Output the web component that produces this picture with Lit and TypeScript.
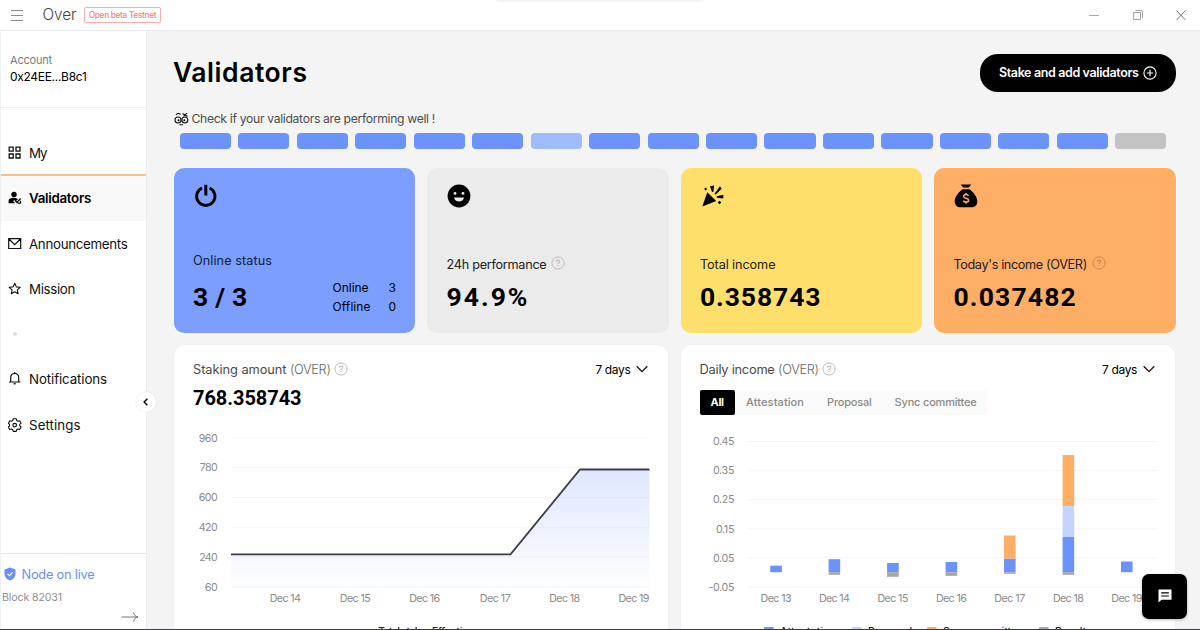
import { LitElement, html, svg, css, nothing } from "lit";
import { customElement, property } from "lit/decorators.js";
import { classMap } from "lit/directives/class-map.js";

/** One-line label whose tracking is tuned so that it takes a given width. */
@customElement("fit-label")
class FitLabel extends LitElement {
  @property({ type: Number }) w = 0;
  @property() text = "";

  static styles = css`
    :host { display: inline-block; white-space: pre; flex: none; }
    .t { display: inline-block; }
  `;

  async firstUpdated() {
    await document.fonts.ready;
    const span = this.renderRoot.querySelector<HTMLElement>(".t")!;
    const natural = span.getBoundingClientRect().width;
    if (this.w && natural) {
      span.style.letterSpacing = `${(this.w - natural) / this.text.length}px`;
    }
  }

  render() {
    return html`<span class="t">${this.text}</span>`;
  }
}

const label = (text: string, w: number, cls = "") =>
  html`<fit-label class=${cls} .text=${text} .w=${w}></fit-label>`;

const navIcons = {
  grid: svg`<g fill="none" stroke="#111" stroke-width="1.3"><path d="M1.2 1.2h4v4h-4zM8 1.2h4v4H8zM1.2 8h4v4h-4zM8 8h4v4H8z"/></g>`,
  validator: svg`<circle cx="6" cy="3.4" r="2.7"/><path d="M.6 12.2V10c0-2.2 2.4-3.3 5-3.3 1.8 0 3.400.5 4.300 1.500L7.700 10.200 6.400 9l-1.200 1.200 2 2z"/><path d="M7 9.700l1.800 1.800 3.800-4M9.500 12.200h3v-2.400" fill="none" stroke="#000" stroke-width="1.200"/>`,
  mail: svg`<path d="M.7 1.700h12v9.800h-12zM1 2l5.700 5.600L12.400 2" fill="none" stroke="#111" stroke-width="1.200"/>`,
  star: svg`<path d="M6.700 1.300l1.600 3.600 3.900.4-2.900 2.600.8 3.900-3.400-2-3.400 2 .8-3.900-2.900-2.600 3.900-.4z" fill="none" stroke="#111" stroke-width="1.100" stroke-linejoin="round"/>`,
  bell: svg`<path d="M1 10h11.400M2.700 10V5.500c0-2.400 1.600-4 4-4s4 1.600 4 4V10" fill="none" stroke="#111" stroke-width="1.200"/><path d="M5.400 11.200h2.600a1.300 1.300 0 0 1-2.600 0zM6 .3h1.400v1.400H6z"/>`,
  gear: svg`<path d="M5.200.8h3l.5 1.700 1.200.7 1.700-.5 1.500 2.500-1.300 1.200v1.400l1.300 1.200-1.500 2.500-1.700-.5-1.200.7-.5 1.700h-3l-.5-1.700-1.200-.7-1.700.5L.3 9l1.300-1.200V6.400L.3 5.200l1.500-2.500 1.700.5 1.200-.7z" fill="none" stroke="#111" stroke-width="1.100" stroke-linejoin="round"/><circle cx="6.700" cy="7.100" r="1.800" fill="none" stroke="#111" stroke-width="1.200"/>`,
};

interface NavItem { text: string; w: number; icon?: keyof typeof navIcons; active?: boolean }
const nav: NavItem[] = [
  { text: "My", w: 17.500, icon: "grid" },
  { text: "Validators", w: 62, icon: "validator", active: true },
  { text: "Announcements", w: 98.500, icon: "mail" },
  { text: "Mission", w: 46, icon: "star" },
  { text: "", w: 0 },
  { text: "Notifications", w: 78, icon: "bell" },
  { text: "Settings", w: 51.700, icon: "gear" },
];

const help = (cls = "") => html`<svg class="help ${cls}" viewBox="0 0 14 14">
  <circle cx="7" cy="7" r="6.1" fill="none" stroke="currentColor" />
  <path d="M5.300 5.700c0-1 .7-1.600 1.700-1.600s1.700.6 1.700 1.500c0 1.200-1.600 1.200-1.600 2.400M7.100 9.100v1" fill="none" stroke="currentColor" stroke-width="1.100" />
</svg>`;

const chevron = html`<svg class="chev" viewBox="0 0 12 8"><path d="M.7 1.200L6 6.600l5.300-5.400" fill="none" stroke="#111" stroke-width="1.300" /></svg>`;

const cardIcons = {
  power: svg`<path d="M8 3.900a9.200 9.200 0 1 0 7.600 0" fill="none" stroke="#000" stroke-width="2.800"/><path d="M11.800.8v10.700" stroke="#000" stroke-width="3"/>`,
  smile: svg`<circle cx="12" cy="12" r="11.400"/><g fill="#ebebeb"><circle cx="8" cy="9.400" r="1.400"/><circle cx="16" cy="9.400" r="1.400"/><path d="M7 13.500h10c-.4 2.400-2.500 4-5 4s-4.600-1.600-5-4z"/></g>`,
  party: svg`<path d="M6.300 8.200L15.200 17 1.300 22.500z"/><path d="M9 2.200l4-.6-.5 6.200-1.500.2zM19 2.200l1.700 2.600-6.200 6-1-1zM15.800 12.200l6.500-1.500v3.700l-6.500-.6zM4.600 3.500l1.500 1.500-1.500 1.500-1.500-1.500zM18.500 16.700l1.800 1.800-1.800 1.800-1.800-1.800z"/>`,
  bag: svg`<path d="M6.800.6h10.400l-2.300 2.900H9.100zM8.600 5.300h6.800c4 2.700 7.900 7.700 7.900 12 0 4-2.400 6-6.300 6H7C3.100 23.300.7 21.300.7 17.300.7 13 4.600 8 8.600 5.300z"/><path d="M14.500 12c-.4-.9-1.300-1.400-2.500-1.400-1.400 0-2.400.7-2.400 1.800 0 2.600 5 1.100 5 3.800 0 1.200-1.100 1.900-2.600 1.900-1.300 0-2.300-.5-2.700-1.500M12 9.100v1.500M12 18.100v1.600" fill="none" stroke="#ffae66" stroke-width="1.500"/>`,
};

interface Day { day: string; x: number; att: number; sync?: [number, number]; prop?: [number, number]; pen?: number }
const days: Day[] = [
  { day: "Dec 13", x: 776, att: 565.700 },
  { day: "Dec 14", x: 834.300, att: 559.200, pen: 574.800 },
  { day: "Dec 15", x: 892.800, att: 563, pen: 576.800 },
  { day: "Dec 16", x: 951.300, att: 562, pen: 575.900 },
  { day: "Dec 17", x: 1009.700, att: 558.700, pen: 573.800, sync: [535.500, 558.700] },
  { day: "Dec 18", x: 1068.300, att: 537, pen: 574.800, sync: [455, 506], prop: [506, 537] },
  { day: "Dec 19", x: 1126.700, att: 561.500 },
];
const ZERO = 572.200;

const stakeTicks: [string, number, number][] = [
  ["960", 437.500, 19], ["780", 467.300, 18], ["600", 497.300, 19],
  ["420", 527.100, 19], ["240", 557, 18.500], ["60", 586.900, 13],
];
const incomeTicks: [string, number, number][] = [
  ["0.45", 441.300, 21.500], ["0.35", 470.400, 21.500], ["0.25", 499.400, 21.500],
  ["0.15", 528.600, 18.500], ["0.05", 557.700, 21.500], ["-0.05", 586.900, 26],
];
const stakeDays: [string, number][] = [
  ["Dec 14", 285.300], ["Dec 15", 355.300], ["Dec 16", 424.700],
  ["Dec 17", 495.200], ["Dec 18", 564.700], ["Dec 19", 634],
];

const ticks = (list: [string, number, number][], right: number, x1: number, x2: number) =>
  list.map(([t, y, w]) => svg`
    <path d="M${x1} ${y + 0.2}H${x2}" stroke="#f4f5f7" stroke-width="1" />
    <text class="axis" x=${right - w} y=${y + 4.100} textLength=${w}>${t}</text>`);

const dayText = (t: string, x: number) =>
  svg`<text class="axis" x=${x - 15.500} y="601.900" textLength="31">${t}</text>`;

@customElement("app-root")
class AppRoot extends LitElement {
  static styles = css`
    :host {
      display: block; width: 1200px; height: 630px; overflow: hidden; position: relative;
      font-family: Inter, "Liberation Sans", sans-serif; color: #000; background: #f4f4f4;
    }
    * { box-sizing: border-box; }
    svg { display: block; flex: none; }
    .top {
      height: 31px; display: flex; align-items: center; background: #fff;
      border-bottom: 1px solid #e8eaed; padding: 0 13px 0 11px;
    }
    .burger { width: 12px; height: 12px; }
    .brand { margin-left: 19.500px; font-size: 15.300px; font-weight: 300; color: #444; line-height: 18px; }
    .badge {
      margin-left: 7.500px; width: 77px; height: 16px; display: flex; justify-content: center; align-items: center;
      border: 1px solid #ffabab; border-radius: 2px; color: #ff8080; font-size: 8.300px; font-weight: 500;
    }
    .win { margin-left: auto; display: flex; gap: 31.500px; }
    .win svg { width: 12px; height: 12px; }
    .notch {
      position: absolute; left: 496px; top: -4px; width: 206px; height: 4px; border-radius: 4px;
      box-shadow: 0 0 4px rgba(0, 0, 0, .12);
    }
    .body { display: flex; height: 599px; }
    .side {
      width: 147px; flex: none; display: flex; flex-direction: column; background: #fff;
      border-left: 1px solid #edf0f4; border-right: 1px solid #e9ebee;
    }
    .acct { height: 77px; padding: 21px 0 0 9px; border-bottom: 1px solid #eef0f2; display: flex; flex-direction: column; }
    .acct .k { font-size: 11px; line-height: 17px; color: #7a7a7a; }
    .acct .v { font-size: 12px; line-height: 16px; }
    .nav { padding-top: 22.500px; display: flex; flex-direction: column; }
    .item { height: 45.280px; display: flex; align-items: center; gap: 7.500px; padding-left: 6.500px; font-size: 13.300px; color: #111; }
    .item svg { width: 14px; height: 14px; }
    .item.active { background: linear-gradient(#ffc083 0 0) top / 100% 1px no-repeat #f9f9f9; box-shadow: 0 -1px 0 #ffc083; font-weight: 600; color: #000; margin-top: -1px; height: 46.280px; }
    .dot { width: 4px; height: 4px; border-radius: 50%; background: #ddd; margin-left: 5px; }
    .foot { margin-top: auto; height: 77px; border-top: 1px solid #e6e8ea; display: flex; flex-direction: column; }
    .live { display: flex; align-items: center; gap: 5.500px; height: 20px; margin: 10px 0 0 3px; color: #6a90f8; font-size: 12.800px; }
    .live svg { width: 12px; height: 14px; }
    .block { font-size: 10.600px; line-height: 15px; color: #8f8f8f; margin: 6px 0 0 1px; }
    .arrow { width: 18px; height: 12px; align-self: flex-end; margin: 6px 7px 0 0; }
    .collapse {
      position: absolute; left: 136px; top: 391.500px; width: 20px; height: 20px; border-radius: 50%;
      background: #fff; box-shadow: 0 0 2px rgba(0, 0, 0, .12); display: grid; place-items: center;
    }
    .collapse svg { width: 8px; height: 10px; }
    .main { flex: 1; padding: 23px 25px 0 27px; overflow: hidden; }
    .head { display: flex; justify-content: space-between; height: 38px; }
    .title { font-size: 26.500px; font-weight: 600; line-height: 37px; margin-left: -1px; }
    .cta {
      width: 196px; height: 37.500px; border-radius: 18px; background: #000; color: #fff; display: flex;
      align-items: center; padding-left: 19px; gap: 4px; font-size: 12.500px; font-weight: 600; margin-right: -1px;
    }
    .cta svg { width: 14px; height: 14px; }
    .check { display: flex; align-items: center; height: 17px; margin-top: 18px; gap: 2.500px; font-size: 12.200px; color: #4d4d4d; }
    .check svg { width: 15px; height: 14px; }
    .bars { display: flex; gap: 7.400px; height: 16px; margin: 6px 8.600px 0 5.800px; }
    .bar { flex: 1; border-radius: 4px; background: #6c93fb; }
    .bar.soft { background: #a1bcfc; }
    .bar.off { background: #c3c3c3; }
    .cards { display: grid; grid-template-columns: repeat(4, 1fr); gap: 12.400px; margin: 19px -.500px 0 0; height: 165px; }
    .card { border-radius: 10px; padding: 15.500px 19px 0; display: flex; flex-direction: column; }
    .card.blue { background: #7b9eff; }
    .card.gray { background: #ebebeb; }
    .card.yellow { background: #ffdf6b; }
    .card.orange { background: #ffae66; }
    .card > svg { width: 24px; height: 24px; margin-left: 1px; }
    .lab { display: flex; align-items: center; height: 18px; margin-top: 47.500px; gap: 5px; font-size: 12.700px; color: #222; }
    .blue .lab { margin-top: 43.500px; color: #13203f; }
    .blue .row { margin-top: 9px; }
    .help { width: 14px; height: 14px; color: #bdbdbd; position: relative; top: -1px; }
    .orange .help { color: #cf8a4d; }
    .row { display: flex; justify-content: space-between; height: 38px; margin-top: 5px; }
    .big { font-family: Roboto, Inter, sans-serif; font-weight: 700; font-size: 26.500px; line-height: 38px; }
    .counts { display: grid; grid-template-columns: 56px auto; font-size: 12px; line-height: 19px; color: #000; justify-items: start; }
    .panels { display: grid; grid-template-columns: 1fr 1fr; gap: 12.200px; margin-top: 12px; }
    .panel { height: 290px; background: #fff; border-radius: 10px 10px 0 0; box-shadow: 0 0 2px rgba(0, 0, 0, .06); }
    .ph { display: flex; align-items: center; height: 20px; margin: 14px 20px 0 19px; font-size: 12.800px; color: #4a4a4a; }
    .ph .unit { color: #666; margin-left: 3.500px; font-weight: 300; }
    .ph .help { margin-left: 3.500px; top: -.500px; }
    .range { margin-left: auto; display: flex; align-items: center; gap: 6px; color: #000; font-size: 12px; }
    .chev { width: 12px; height: 8px; }
    .sum { font-family: Roboto, Inter, sans-serif; font-weight: 700; font-size: 20px; line-height: 22px; height: 22px; margin: 8px 19px 0; }
    .tabs {
      display: flex; align-items: center; width: 287px; height: 24.500px; margin: 11px 19px 0; background: #fafafa;
      border-radius: 2px; font-size: 11px; font-weight: 500; color: #8a8a8a; gap: 23px;
    }
    .tab-on { width: 35px; height: 24.500px; border-radius: 2px; background: #000; color: #fff; font-weight: 700; display: grid; place-items: center; margin-right: -11.500px; }
    .chart { width: 494.400px; height: 210px; }
    .stake { margin-top: 11px; }
    .income { margin-top: 5.500px; }
    .axis { font-size: 10.700px; fill: #8b8b8b; }
    .legend { font-size: 10.500px; fill: #222; font-weight: 500; }
    .chat {
      position: absolute; left: 1142px; top: 573.500px; width: 45px; height: 45px; border-radius: 7px; background: #000;
      box-shadow: 0 1px 3px rgba(0, 0, 0, .25); display: grid; place-items: center;
    }
    .chat svg { width: 14px; height: 14px; }
    .edge { position: absolute; left: 0; right: 0; bottom: 0; height: 1px; background: #3c3c3e; }
  `;

  private top() {
    return html`<header class="top">
      <svg class="burger" viewBox="0 0 12 12"><path d="M0 1.500h12M0 6.500h12M0 11.500h12" stroke="#8a8a8a" /></svg>
      ${label("Over", 34, "brand")}
      <div class="badge">${label("Open beta Testnet", 67.500)}</div>
      <div class="win">
        <svg viewBox="0 0 12 12"><path d="M1 6.500h10" stroke="#aaa" /></svg>
        <svg viewBox="0 0 12 12"><path d="M1.500 3.500h7v7h-7zM3.500 1.500h5.300q1.700 0 1.700 1.700V9" fill="none" stroke="#999" stroke-width=".9" /></svg>
        <svg viewBox="0 0 12 12"><path d="M1.500 1.500l9 9.500M10.500 1.500l-9 9.500" stroke="#777" /></svg>
      </div>
    </header>`;
  }

  private side() {
    return html`<aside class="side">
      <div class="acct">${label("Account", 42, "k")}${label("0x24EE...B8c1", 76.500, "v")}</div>
      <nav class="nav">
        ${nav.map((n) => html`<div class=${classMap({ item: true, active: !!n.active })}>
          ${n.icon ? html`<svg viewBox="0 0 14 14">${navIcons[n.icon]}</svg>${label(n.text, n.w)}` : html`<i class="dot"></i>`}
        </div>`)}
      </nav>
      <div class="foot">
        <div class="live">
          <svg viewBox="0 0 12 14"><path d="M6 .5l5.500 2v4.600c0 3-2.200 5.300-5.500 6.500C2.700 12.400.5 10.100.5 7.100V2.500z" fill="#6a90f8" /><path d="M3.600 6.800l1.800 1.800 3.200-3.200" fill="none" stroke="#fff" stroke-width="1.200" /></svg>
          ${label("Node on live", 73)}
        </div>
        ${label("Block 82031", 60, "block")}
        <svg class="arrow" viewBox="0 0 18 12"><path d="M.5 6h16.500M12.500 1.500c.6 2.500 2 4 4.500 4.500-2.500.5-3.900 2-4.500 4.500" fill="none" stroke="#777" /></svg>
      </div>
    </aside>`;
  }

  private card(cls: string, icon: keyof typeof cardIcons, text: string, w: number, value: string, vw: number, q: boolean, extra: unknown = nothing) {
    return html`<section class="card ${cls}">
      <svg viewBox="0 0 24 24">${cardIcons[icon]}</svg>
      <div class="lab">${label(text, w)}${q ? help() : nothing}</div>
      <div class="row">${label(value, vw, "big")}${extra}</div>
    </section>`;
  }

  private range() {
    return html`<div class="range">${label("7 days", 35)}${chevron}</div>`;
  }

  private stakePanel() {
    const line = "M231 554.300H510.500L580 469.500H649.500";
    return html`<section class="panel">
      <div class="ph">${label("Staking amount", 93.500)}${label("(OVER)", 40.500, "unit")}${help()}${this.range()}</div>
      <div class="sum">${label("768.358743", 108.500)}</div>
      <svg class="chart stake" viewBox="174 420 494.400 210">
        <defs><linearGradient id="fade" x1="0" y1="0" x2="0" y2="1">
          <stop offset="0" stop-color="#6c93fb" stop-opacity=".22" /><stop offset="1" stop-color="#6c93fb" stop-opacity=".01" />
        </linearGradient></defs>
        ${ticks(stakeTicks, 217.700, 231, 649.500)}
        <path d="${line}V587H231z" fill="url(#fade)" />
        <path d=${line} fill="none" stroke="#3b3d48" stroke-width="1.800" />
        ${stakeDays.map(([t, x]) => dayText(t, x))}
        <text class="legend" x="378" y="635.500" textLength="48">Total stake</text>
        <text class="legend" x="432" y="635.500" textLength="42">Effective</text>
      </svg>
    </section>`;
  }

  private incomePanel() {
    const rect = (x: number, a: number, b: number, fill: string) =>
      svg`<rect x=${x - 5.800} y=${a} width="11.600" height=${b - a} fill=${fill} />`;
    const legend: [number, string, string, number][] = [
      [764, "#6c93fb", "Attestation", 56], [852, "#c5d4fd", "Proposal", 44],
      [927, "#ffae66", "Sync committee", 80], [1039, "#a6a6a6", "Penalty", 37],
    ];
    return html`<section class="panel">
      <div class="ph">${label("Daily income", 75)}${label("(OVER)", 40.500, "unit")}${help()}${this.range()}</div>
      <div class="tabs">
        <div class="tab-on">${label("All", 13)}</div>
        ${label("Attestation", 58)}${label("Proposal", 44.500)}${label("Sync committee", 82)}
      </div>
      <svg class="chart income" viewBox="680.900 420 494.400 210">
        ${ticks(incomeTicks, 734.300, 748, 1158)}
        ${days.map((d) => svg`
          ${rect(d.x, d.att, ZERO, "#6c93fb")}
          ${d.prop ? rect(d.x, d.prop[0], d.prop[1], "#c5d4fd") : nothing}
          ${d.sync ? rect(d.x, d.sync[0], d.sync[1], "#ffae66") : nothing}
          ${d.pen ? rect(d.x, ZERO, d.pen, "#a6a6a6") : nothing}
          ${dayText(d.day, d.x)}`)}
        ${legend.map(([x, c, t, w]) => svg`
          <rect x=${x} y="627" width="9.500" height="8" fill=${c} />
          <text class="legend" x=${x + 16} y="635.500" textLength=${w}>${t}</text>`)}
      </svg>
    </section>`;
  }

  render() {
    const states = Array.from({ length: 17 }, (_, i) => (i === 6 ? "soft" : i === 16 ? "off" : ""));
    return html`
      ${this.top()}
      <div class="notch"></div>
      <div class="body">
        ${this.side()}
        <main class="main">
          <div class="head">
            ${label("Validators", 134.500, "title")}
            <div class="cta">${label("Stake and add validators", 139.500)}
              <svg viewBox="0 0 14 14"><circle cx="7" cy="7" r="6.100" fill="none" stroke="#fff" stroke-width="1.100" /><path d="M7 3.800v6.400M3.800 7h6.400" stroke="#fff" stroke-width="1.200" /></svg>
            </div>
          </div>
          <div class="check">
            <svg viewBox="0 0 15 14"><g fill="none" stroke="#111" stroke-width="1.100"><circle cx="4" cy="8" r="3"/><circle cx="10.800" cy="8" r="3"/><path d="M2 3Q4 .3 6.500 2.500M8.500 1.500l5 3M13 1.200L9.500 4.400M5.500 12.800h3.500"/></g><circle cx="4.500" cy="8.200" r="1"/><circle cx="10.300" cy="8.200" r="1"/></svg>
            ${label("Check if your validators are performing well !", 243.500)}
          </div>
          <div class="bars">${states.map((s) => html`<i class="bar ${s}"></i>`)}</div>
          <div class="cards">
            ${this.card("blue", "power", "Online status", 79, "3 / 3", 54.500, false, html`<div class="counts">
              ${label("Online", 36)}${label("3", 7.500)}${label("Offline", 38)}${label("0", 7.500)}</div>`)}
            ${this.card("gray", "smile", "24h performance", 100, "94.9%", 83, true)}
            ${this.card("yellow", "party", "Total income", 75.500, "0.358743", 121.500, false)}
            ${this.card("orange", "bag", "Today's income (OVER)", 133.500, "0.037482", 123.500, true)}
          </div>
          <div class="panels">${this.stakePanel()}${this.incomePanel()}</div>
        </main>
      </div>
      <div class="collapse"><svg viewBox="0 0 8 10"><path d="M5.400 1.800L2.100 5l3.300 3.200" fill="none" stroke="#000" stroke-width="1.400" /></svg></div>
      <div class="chat"><svg viewBox="0 0 14 14"><path d="M.5.500h13v10.300H3.500L.5 13.500z" fill="#fff" /><path d="M3.200 3.900h7.600M3.200 7h7.600" stroke="#000" stroke-width="1.200" /></svg></div>
      <div class="edge"></div>
    `;
  }
}
